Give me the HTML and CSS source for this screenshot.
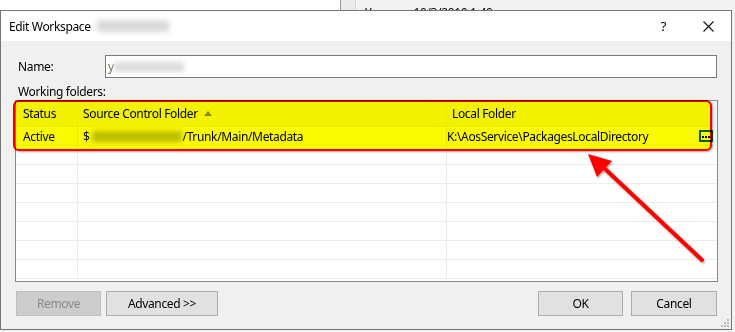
FILE: index.html
```html
<!DOCTYPE html>
<html>
<head>
<meta charset="utf-8">
<link rel="stylesheet" href="styles.css">
</head>
<body>
<div class="desk">
  <div class="desk-white"></div>
  <div class="desk-col"></div>
  <div class="desk-rest"><span class="desk-y">Y</span><span class="desk-date">10/3/2019 1:40</span></div>
</div>

<div class="dialog">
  <div class="titlebar">
    <span class="title">Edit Workspace <span class="blur blur-title"></span></span>
    <span class="tb-btn help">?</span>
    <span class="tb-btn close"><svg width="11" height="11" viewBox="0 0 11 11"><path d="M0.5 0.5 L10.5 10.5 M10.5 0.5 L0.5 10.5" stroke="#111" stroke-width="1.1" fill="none"/></svg></span>
  </div>
  <div class="content">
    <div class="name-row">
      <label class="lbl name-lbl">Name:</label>
      <div class="input"><span class="ych">y</span><span class="blur blur-input"></span></div>
    </div>
    <div class="lbl wf-lbl">Working folders:</div>
    <div class="grid-wrap">
      <div class="grid">
        <div class="hcell c1">Status</div>
        <div class="hcell c2">Source Control Folder <span class="sort"></span></div>
        <div class="hcell c3">Local Folder</div>

        <div class="cell c1 sel">Active</div>
        <div class="cell c2 sel">$<span class="blur blur-path"></span>/Trunk/Main/Metadata</div>
        <div class="cell c3 sel edit"><span>K:\AosService\PackagesLocalDirectory</span><span class="ell"><i></i><i></i><i></i></span></div>

        <div class="cell c1"></div><div class="cell c2"></div><div class="cell c3"></div>
        <div class="cell c1"></div><div class="cell c2"></div><div class="cell c3"></div>
        <div class="cell c1"></div><div class="cell c2"></div><div class="cell c3"></div>
        <div class="cell c1"></div><div class="cell c2"></div><div class="cell c3"></div>
        <div class="cell c1"></div><div class="cell c2"></div><div class="cell c3"></div>
        <div class="cell c1"></div><div class="cell c2"></div><div class="cell c3"></div>
        <div class="cell c1"></div><div class="cell c2"></div><div class="cell c3"></div>
      </div>
      <div class="marker"></div>
    </div>
    <div class="btn-row">
      <button class="btn remove" disabled>Remove</button>
      <button class="btn advanced">Advanced &gt;&gt;</button>
      <span class="spacer"></span>
      <button class="btn ok">OK</button>
      <button class="btn cancel">Cancel</button>
    </div>
  </div>
  <svg class="grip" width="8" height="8" viewBox="0 0 8 8">
    <rect x="6" y="0" width="2" height="2" fill="#b8b8b8"/>
    <rect x="3" y="3" width="2" height="2" fill="#b8b8b8"/>
    <rect x="6" y="3" width="2" height="2" fill="#b8b8b8"/>
    <rect x="0" y="6" width="2" height="2" fill="#b8b8b8"/>
    <rect x="3" y="6" width="2" height="2" fill="#b8b8b8"/>
    <rect x="6" y="6" width="2" height="2" fill="#b8b8b8"/>
  </svg>
</div>

<svg class="arrow" width="735" height="332" viewBox="0 0 735 332">
  <defs>
    <filter id="sh" x="-20%" y="-20%" width="140%" height="140%">
      <feDropShadow dx="1" dy="1.5" stdDeviation="1.2" flood-color="#000" flood-opacity="0.35"/>
    </filter>
  </defs>
  <g filter="url(#sh)">
    <line x1="702" y1="260" x2="603" y2="167" stroke="#ff0000" stroke-width="4" stroke-linecap="round"/>
    <polygon points="588,154 612,161 597,177" fill="#ff0000"/>
  </g>
</svg>
</body>
</html>
```
FILE: styles.css
```css
html, body {
  margin: 0;
  padding: 0;
}
body {
  width: 735px;
  height: 332px;
  background: #f2f2f2;
  font-family: "Segoe UI", "Noto Sans", sans-serif;
  font-size: 12px;
  letter-spacing: -0.35px;
  color: #000;
  position: relative;
  overflow: hidden;
}

/* background window strip */
.desk {
  display: flex;
  height: 10px;
  overflow: hidden;
}
.desk-white {
  width: 340px;
  background: #fff;
  border-right: 1px solid #a0a0a0;
}
.desk-col {
  width: 14px;
  background: #ebebeb;
  border-right: 1px solid #d6d6d6;
}
.desk-rest {
  flex: 1;
  display: flex;
  padding-left: 9px;
  padding-top: 5px;
  line-height: 16px;
}
.desk-date {
  margin-left: 42px;
}

/* dialog window */
.dialog {
  position: absolute;
  left: 0;
  top: 10px;
  width: 732px;
  height: 320px;
  box-sizing: border-box;
  border: 1px solid #757575;
  background: #f0f0f0;
  display: flex;
  flex-direction: column;
}
.titlebar {
  height: 30px;
  background: #fff;
  display: flex;
  align-items: center;
  padding-left: 8px;
  flex-shrink: 0;
}
.title {
  flex: 1;
  display: flex;
  align-items: center;
  white-space: pre;
}
.tb-btn {
  width: 45px;
  height: 30px;
  display: flex;
  align-items: center;
  justify-content: center;
}
.help {
  font-size: 13px;
}

.blur {
  display: inline-block;
  filter: blur(2.5px);
}
.blur-title {
  width: 72px;
  height: 12px;
  background: #dadada;
  margin-left: 4px;
}

.content {
  flex: 1;
  padding: 14px 13px 0 14px;
  display: flex;
  flex-direction: column;
}
.name-row {
  display: flex;
  align-items: center;
  height: 23px;
}
.lbl {
  margin-left: 3px;
}
.name-lbl {
  width: 87px;
}
.input {
  width: 612px;
  height: 23px;
  box-sizing: border-box;
  border: 1px solid #7a7a7a;
  background: #fff;
  display: flex;
  align-items: center;
  padding-left: 2px;
}
.ych {
  color: #6a6a4a;
}
.blur-input {
  width: 70px;
  height: 10px;
  background: #dcdcdc;
}
.wf-lbl {
  height: 16px;
  line-height: 16px;
  margin-top: 6px;
}

/* grid */
.grid-wrap {
  position: relative;
}
.grid {
  height: 182px;
  box-sizing: border-box;
  border: 1px solid #828790;
  background: #fff;
  display: grid;
  grid-template-columns: 62px 369px 1fr;
  grid-template-rows: 26px repeat(8, 19px);
  overflow: hidden;
}
.hcell, .cell {
  box-sizing: border-box;
  border-right: 1px solid #ececec;
  border-bottom: 1px solid #ececec;
  display: flex;
  align-items: center;
  white-space: nowrap;
  overflow: hidden;
}
.c3 {
  border-right: none;
}
.hcell {
  background: #f2f2f2;
  padding-left: 5px;
}
.hcell.c1 {
  padding-left: 7px;
}
.sort {
  display: inline-block;
  width: 0;
  height: 0;
  border-left: 4px solid transparent;
  border-right: 4px solid transparent;
  border-bottom: 5px solid #8a8a8a;
  margin-left: 6px;
}
.cell {
  padding-left: 5px;
}
.cell.c1 {
  padding-left: 7px;
}
.cell.sel {
  background: #fafafa;
}
.cell.edit {
  padding-left: 0;
  padding-right: 4px;
  justify-content: space-between;
}
.blur-path {
  width: 90px;
  height: 11px;
  background: #bdbdbd;
  margin: 0 1px 0 2px;
}
.ell {
  width: 14px;
  height: 12px;
  box-sizing: border-box;
  border: 2px solid #0b5f0b;
  display: flex;
  align-items: center;
  justify-content: center;
  gap: 1px;
  padding-top: 2px;
}
.ell i {
  display: block;
  width: 2px;
  height: 2px;
  background: #000;
}

/* highlighter overlay */
.marker {
  position: absolute;
  left: -2px;
  top: 0;
  width: 699px;
  height: 51px;
  box-sizing: border-box;
  border: 2px solid #ff0000;
  border-radius: 6px;
  background: #ffff00;
  mix-blend-mode: multiply;
  box-shadow: 1px 1px 2px rgba(0, 0, 0, 0.35);
}

/* buttons */
.btn-row {
  display: flex;
  margin-top: 9px;
  height: 25px;
}
.btn {
  height: 25px;
  box-sizing: border-box;
  border: 1px solid #adadad;
  background: #e1e1e1;
  font-family: "Segoe UI", "Noto Sans", sans-serif;
  font-size: 12px;
  letter-spacing: -0.35px;
  color: #000;
  padding: 0;
}
.remove {
  width: 85px;
  margin-left: 1px;
  background: #cccccc;
  border-color: #bfbfbf;
  color: #8a8a8a;
}
.advanced {
  width: 112px;
  margin-left: 5px;
}
.spacer {
  flex: 1;
}
.ok {
  width: 85px;
}
.cancel {
  width: 86px;
  margin-left: 8px;
  margin-right: 1px;
}

.grip {
  position: absolute;
  right: 2px;
  bottom: 2px;
}

.arrow {
  position: absolute;
  left: 0;
  top: 0;
  pointer-events: none;
}
```
